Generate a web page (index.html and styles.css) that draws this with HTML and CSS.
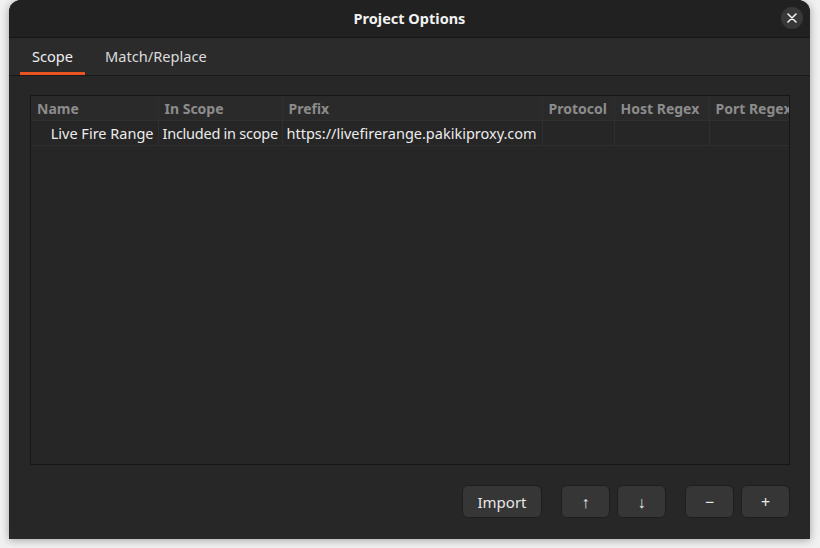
FILE: index.html
```html
<!DOCTYPE html>
<html>
<head>
<meta charset="utf-8">
<link rel="stylesheet" href="styles.css">
</head>
<body>
<div class="window">
  <div class="titlebar">
    <span></span>
    <span class="title">Project Options</span>
    <button class="close" aria-label="Close">
      <svg width="10" height="10" viewBox="0 0 10 10"><path d="M1 1 L9 9 M9 1 L1 9" stroke="#f0f0f0" stroke-width="1.6" stroke-linecap="round"/></svg>
    </button>
  </div>
  <div class="tabs">
    <div class="tab active">Scope</div>
    <div class="tab">Match/Replace</div>
  </div>
  <div class="content">
    <div class="tablebox">
      <table>
        <colgroup>
          <col class="c-name"><col class="c-scope"><col class="c-prefix"><col class="c-proto"><col class="c-host"><col class="c-port">
        </colgroup>
        <thead>
          <tr><th>Name</th><th>In Scope</th><th>Prefix</th><th>Protocol</th><th>Host Regex</th><th>Port Regex</th></tr>
        </thead>
        <tbody>
          <tr><td class="name">Live Fire Range</td><td class="scope">Included in scope</td><td>https://livefirerange.pakikiproxy.com</td><td></td><td></td><td></td></tr>
        </tbody>
      </table>
    </div>
    <div class="actions">
      <button class="btn btn-import">Import</button>
      <div class="group">
        <button class="btn btn-sq">↑</button>
        <button class="btn btn-sq">↓</button>
      </div>
      <div class="group">
        <button class="btn btn-sq">−</button>
        <button class="btn btn-sq">+</button>
      </div>
    </div>
  </div>
</div>
</body>
</html>
```
FILE: styles.css
```css
html, body {
  margin: 0;
  padding: 0;
}
body {
  background: #f1f1f1;
  width: 820px;
  height: 548px;
  overflow: hidden;
  font-family: "Noto Sans", sans-serif;
}
.window {
  margin-left: 9px;
  width: 801px;
  height: 539px;
  background: #282828;
  border-radius: 12px 12px 0 0;
  box-shadow: 0 1px 8px rgba(0,0,0,0.35);
  display: flex;
  flex-direction: column;
  overflow: hidden;
}
.titlebar {
  height: 37px;
  background: #212121;
  border-bottom: 1px solid #161616;
  display: grid;
  grid-template-columns: 1fr auto 1fr;
  align-items: center;
}
.title {
  color: #f2f2f2;
  font-weight: bold;
  font-size: 14.5px;
}
.close {
  justify-self: end;
  margin-right: 7px;
  width: 22px;
  height: 22px;
  border-radius: 50%;
  border: none;
  background: #383838;
  padding: 0;
  display: flex;
  align-items: center;
  justify-content: center;
}
.tabs {
  height: 38px;
  background: #2b2b2b;
  display: flex;
  gap: 8px;
  padding-left: 11px;
  border-bottom: 1px solid #181818;
}
.tab {
  color: #dcdcdc;
  font-size: 14.6px;
  padding: 0 12px;
  display: flex;
  align-items: center;
  border-bottom: 3px solid transparent;
  padding-top: 3px;
}
.tab.active {
  border-bottom-color: #e95420;
  color: #eeeeee;
}
.content {
  flex: 1;
  display: flex;
  flex-direction: column;
  padding: 19px 20px 21px 21px;
  background: #272727;
}
.tablebox {
  height: 368px;
  border: 1px solid #161616;
  background: #262626;
  overflow: hidden;
}
table {
  border-collapse: collapse;
  table-layout: fixed;
  width: 800px;
}
col.c-name { width: 127px; }
col.c-scope { width: 124px; }
col.c-prefix { width: 260px; }
col.c-proto { width: 72px; }
col.c-host { width: 95px; }
col.c-port { width: 122px; }
th, td {
  white-space: nowrap;
  overflow: hidden;
  text-align: left;
  border-right: 1px solid #2f2f2f;
}
th {
  height: 24px;
  padding: 0 0 0 6px;
  color: #8c8c8c;
  font-weight: bold;
  font-size: 14px;
  background: #2a2a2a;
  border-bottom: 1px solid #303030;
}
td {
  height: 24px;
  padding: 0 0 0 4px;
  color: #ececec;
  font-size: 14.5px;
  border-bottom: 1px solid #2e2e2e;
}
td.name {
  text-align: right;
  padding-right: 4px;
}
td.scope {
  letter-spacing: -0.25px;
}
.actions {
  margin-top: 20px;
  display: flex;
  justify-content: flex-end;
  gap: 19px;
}
.group {
  display: flex;
  gap: 7px;
}
.btn {
  height: 33px;
  background: #363636;
  border: 1px solid #1e1e1e;
  border-radius: 6px;
  color: #e8e8e8;
  font-family: "Noto Sans", sans-serif;
  font-size: 15px;
  padding: 0;
}
.btn-import {
  width: 80px;
}
.btn-sq {
  width: 49px;
  font-size: 16px;
}
```
